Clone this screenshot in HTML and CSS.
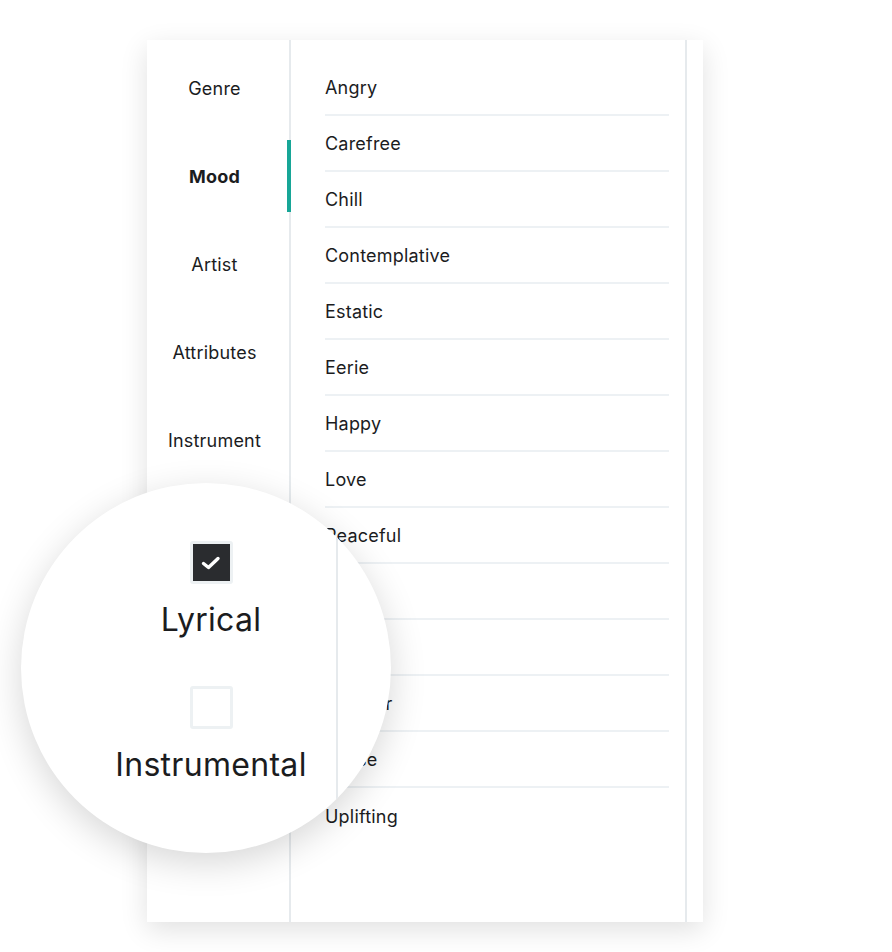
FILE: index.html
```html
<!DOCTYPE html>
<html lang="en">
<head>
  <meta charset="UTF-8">
  <meta name="viewport" content="width=device-width, initial-scale=1.0">
  <title>Mood Filter</title>
  <link rel="stylesheet" href="styles.css">
</head>
<body>

  <div class="stage">
    <div class="panel">
      <nav class="nav">
        <div class="nav-item">Genre</div>
        <div class="nav-item active">Mood</div>
        <div class="nav-item">Artist</div>
        <div class="nav-item">Attributes</div>
        <div class="nav-item">Instrument</div>
      </nav>

      <ul class="list">
        <li>Angry</li>
        <li>Carefree</li>
        <li>Chill</li>
        <li>Contemplative</li>
        <li>Estatic</li>
        <li>Eerie</li>
        <li>Happy</li>
        <li>Love</li>
        <li>Peaceful</li>
        <li>Sad</li>
        <li>Scary</li>
        <li>Somber</li>
        <li>Tense</li>
        <li>Uplifting</li>
      </ul>

      <div class="spacer"></div>
    </div>

    <!-- magnified detail of the attributes filter -->
    <div class="lens">
      <div class="lens-divider"></div>
      <div class="lens-options">
        <div class="checkbox checked">
          <svg width="24" height="24" viewBox="0 0 24 24">
            <polyline points="4.5,12.5 9.5,16.5 19,7.5" fill="none" stroke="#fff" stroke-width="3.4" stroke-linecap="round" stroke-linejoin="round"/>
          </svg>
        </div>
        <div class="option-label">Lyrical</div>
        <div class="checkbox"></div>
        <div class="option-label">Instrumental</div>
      </div>
    </div>
  </div>

</body>
</html>
```

FILE: styles.css
```css
* {
  margin: 0;
  padding: 0;
  box-sizing: border-box;
}

body {
  font-family: 'Inter', 'Lato', sans-serif;
  background: #fff;
  color: #1b1c1e;
}

.stage {
  position: relative;
  width: 892px;
  height: 952px;
  padding: 40px 0 0 147px;
}

.panel {
  display: flex;
  width: 556px;
  height: 882px;
  background: #fff;
  box-shadow: 0 8px 26px rgba(0,0,0,0.12);
}

.nav {
  width: 144px;
  padding-top: 4px;
  border-right: 2px solid #e6eaed;
}

.nav-item {
  position: relative;
  height: 88px;
  display: flex;
  align-items: center;
  justify-content: center;
  padding-right: 7px;
  font-size: 18px;
  letter-spacing: 0.2px;
}

.nav-item.active {
  font-weight: 700;
}

.nav-item.active::after {
  content: "";
  position: absolute;
  right: -2px;
  top: 8px;
  width: 4px;
  height: 72px;
  background: #17a697;
}

.list {
  list-style: none;
  width: 396px;
  padding: 20px 16px 0 34px;
  border-right: 2px solid #e6eaed;
}

.list li {
  height: 56px;
  display: flex;
  align-items: center;
  font-size: 18px;
  letter-spacing: 0.2px;
  border-bottom: 2px solid #edf1f4;
}

.list li:last-child {
  border-bottom: none;
}

.spacer {
  flex: 1;
}

.lens {
  position: absolute;
  left: 21px;
  top: 483px;
  width: 370px;
  height: 370px;
  border-radius: 50%;
  overflow: hidden;
  background: #fff;
  box-shadow: 0 10px 36px rgba(0,0,0,0.16);
}

.lens-divider {
  position: absolute;
  left: 315px;
  top: 0;
  width: 2px;
  height: 100%;
  background: #e6eaed;
}

.lens-options {
  width: 380px;
  padding-top: 58px;
  display: flex;
  flex-direction: column;
  align-items: center;
}

.checkbox {
  width: 43px;
  height: 43px;
  border: 3px solid #edf1f3;
  border-radius: 3px;
  display: flex;
  align-items: center;
  justify-content: center;
}

.checkbox.checked {
  background: #2a2c2f;
}

.option-label {
  font-size: 32px;
  line-height: 40px;
  letter-spacing: 0.3px;
  margin: 16px 0 46px;
}
```
